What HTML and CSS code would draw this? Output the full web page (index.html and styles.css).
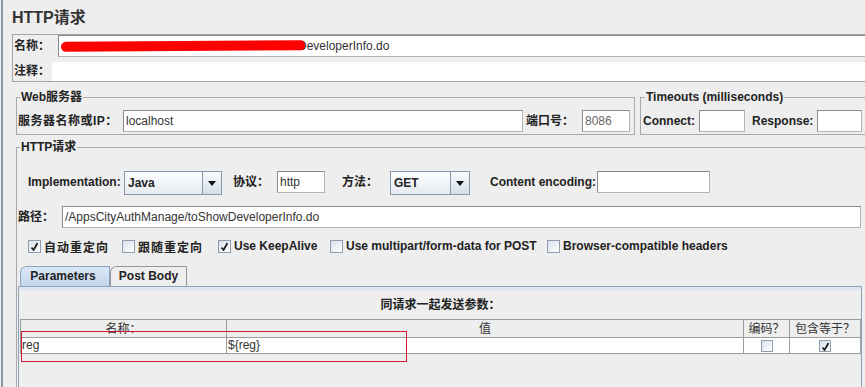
FILE: index.html
```html
<!DOCTYPE html>
<html lang="zh-CN">
<head>
    <meta charset="UTF-8">
    <title>HTTP请求</title>
    <link rel="stylesheet" href="styles.css">
</head>
<body>
    <div class="app">
        <h1 class="title">HTTP请求</h1>

        <!-- name / comment block -->
        <div class="name-box">
            <div class="name-row">
                <span class="lbl name-lbl">名称：</span>
                <div class="field name-field">
                    <span class="masked"></span>DeveloperInfo.do
                    <span class="scribble"></span>
                </div>
            </div>
            <div class="comment-row">
                <span class="lbl comment-lbl">注释：</span>
                <div class="comment-field"></div>
            </div>
        </div>

        <div class="server-row">
            <fieldset class="group web-group">
                <legend>Web服务器</legend>
                <div class="row">
                    <span class="lbl host-lbl">服务器名称或IP：</span>
                    <div class="field host-field">localhost</div>
                    <span class="lbl port-lbl">端口号：</span>
                    <div class="field port-field">8086</div>
                </div>
            </fieldset>
            <fieldset class="group timeout-group">
                <legend>Timeouts (milliseconds)</legend>
                <div class="row">
                    <span class="lbl connect-lbl">Connect:</span>
                    <div class="field connect-field"></div>
                    <span class="lbl response-lbl">Response:</span>
                    <div class="field response-field"></div>
                </div>
            </fieldset>
        </div>

        <fieldset class="group http-group">
            <legend>HTTP请求</legend>

            <div class="impl-row">
                <span class="lbl impl-lbl">Implementation:</span>
                <div class="combo impl-combo">
                    <span class="combo-value">Java</span>
                    <span class="combo-btn"><span class="arrow"></span></span>
                </div>
                <span class="lbl proto-lbl">协议：</span>
                <div class="field proto-field">http</div>
                <span class="lbl method-lbl">方法：</span>
                <div class="combo method-combo">
                    <span class="combo-value">GET</span>
                    <span class="combo-btn"><span class="arrow"></span></span>
                </div>
                <span class="lbl enc-lbl">Content encoding:</span>
                <div class="field enc-field"></div>
            </div>

            <div class="path-row">
                <span class="lbl path-lbl">路径：</span>
                <div class="field path-field">/AppsCityAuthManage/toShowDeveloperInfo.do</div>
            </div>

            <div class="check-row">
                <label class="check w1"><span class="cb on"></span><span class="wide">自动重定向</span></label>
                <label class="check w2"><span class="cb"></span><span class="wide">跟随重定向</span></label>
                <label class="check w3"><span class="cb on"></span>Use KeepAlive</label>
                <label class="check w4"><span class="cb"></span>Use multipart/form-data for POST</label>
                <label class="check"><span class="cb"></span>Browser-compatible headers</label>
            </div>

            <div class="tabs">
                <div class="tab active">Parameters</div>
                <div class="tab">Post Body</div>
            </div>
            <div class="tab-panel">
                <div class="panel-title">同请求一起发送参数：</div>
                <table class="params">
                    <colgroup>
                        <col class="c-name">
                        <col class="c-value">
                        <col class="c-enc">
                        <col class="c-eq">
                    </colgroup>
                    <thead>
                        <tr>
                            <th>名称：</th>
                            <th>值</th>
                            <th>编码？</th>
                            <th>包含等于？</th>
                        </tr>
                    </thead>
                    <tbody>
                        <tr>
                            <td>reg</td>
                            <td>${reg}</td>
                            <td class="mid"><span class="cb small"></span></td>
                            <td class="mid"><span class="cb small on"></span></td>
                        </tr>
                    </tbody>
                </table>
            </div>
        </fieldset>
    </div>

    <div class="mark"></div>
</body>
</html>
```

FILE: styles.css
```css
html, body {
    margin: 0;
    height: 100%;
}

body {
    background: #eeeeee;
    font-family: "Liberation Sans", "Noto Sans CJK SC", sans-serif;
    font-size: 12px;
    color: #222;
    overflow: hidden;
    position: relative;
}

.app {
    margin-left: 1px;
    border-left: 2px solid #8f98aa;
    width: 880px;
    height: 387px;
    overflow: hidden;
}

.title {
    margin: 0;
    padding: 8px 0 0 9px;
    font-size: 16px;
    line-height: 20px;
    font-weight: bold;
    color: #333;
}

.lbl {
    font-weight: bold;
    white-space: nowrap;
    flex: none;
}

/* text fields */
.field {
    box-sizing: border-box;
    height: 22px;
    background: #fff;
    border: 1px solid #b4b4b4;
    border-top-color: #8a8a8a;
    border-left-color: #8a8a8a;
    padding: 0 2px;
    line-height: 20px;
    color: #333;
    white-space: nowrap;
    overflow: hidden;
    flex: none;
}

/* name / comment */
.name-box {
    margin: 6px 0 0 9px;
    border: 1px solid #a5a5a5;
    border-right: none;
}

.name-row {
    display: flex;
    height: 22px;
}

.name-lbl {
    width: 44px;
    padding-left: 1px;
    line-height: 22px;
}

.name-field {
    flex: 1;
    position: relative;
}

.masked {
    display: inline-block;
    width: 237px;
}

/* red marker stroke hiding part of the url */
.scribble {
    position: absolute;
    left: 2px;
    top: 5px;
    width: 244px;
    height: 10px;
    background: #ff0000;
    border-radius: 6px 5px 4px 6px;
    transform: rotate(-0.4deg);
}

.comment-row {
    display: flex;
    height: 19px;
    margin-top: 5px;
}

.comment-lbl {
    width: 38px;
    padding-left: 1px;
    line-height: 19px;
}

.comment-field {
    flex: 1;
    background: #fff;
}

/* titled groups */
.group {
    margin: 0;
    min-width: 0;
    box-sizing: border-box;
    border: 1px solid #a9a9a9;
    padding: 6px 2px 2px 1px;
}

.group legend {
    font-weight: bold;
    line-height: 14px;
    padding: 0 1px;
    margin-left: 2px;
    color: #222;
}

.row {
    display: flex;
    align-items: center;
}

.row .lbl {
    line-height: 22px;
}

.server-row {
    display: flex;
    gap: 5px;
    margin: 8px 0 0 13px;
}

.web-group {
    width: 619px;
    flex: none;
}

.host-lbl { width: 105px; letter-spacing: 0.5px; }
.host-field { width: 400px; }
.port-lbl { width: 56px; padding-left: 3px; }
.port-field { width: 48px; color: #666; }

.timeout-group {
    width: 230px;
    flex: none;
    padding-left: 2px;
}

.connect-lbl { width: 56px; }
.connect-field { width: 46px; }
.response-lbl { width: 65px; margin-left: 7px; }
.response-field { width: 45px; }

/* HTTP request group */
.http-group {
    width: 860px;
    height: 260px;
    margin: 5px 0 0 13px;
    padding: 17px 0 0 1px;
}

.impl-row {
    display: flex;
    align-items: flex-start;
    height: 24px;
    padding-left: 10px;
}

.impl-row .lbl {
    line-height: 22px;
}

.impl-lbl { width: 96px; }
.proto-lbl { width: 44px; margin-left: 11px; }
.proto-field { width: 48px; }
.method-lbl { width: 48px; margin-left: 17px; }
.enc-lbl { width: 107px; margin-left: 20px; }
.enc-field { width: 113px; }

.combo {
    display: flex;
    box-sizing: border-box;
    height: 24px;
    border: 1px solid #8797aa;
    background: linear-gradient(#fbfcfd, #e6ebf1);
    flex: none;
}

.impl-combo { width: 98px; }
.method-combo { width: 80px; }

.combo-value {
    flex: 1;
    padding-left: 3px;
    line-height: 22px;
    font-weight: bold;
    color: #222;
}

.combo-btn {
    width: 18px;
    border-left: 1px solid #8797aa;
    background: linear-gradient(#f8fafc, #d5dee8);
    display: flex;
    align-items: center;
    justify-content: center;
}

.arrow {
    width: 0;
    height: 0;
    border-left: 4px solid transparent;
    border-right: 4px solid transparent;
    border-top: 5px solid #111;
}

.path-row {
    display: flex;
    margin-top: 11px;
}

.path-lbl {
    width: 44px;
    line-height: 22px;
}

.path-field { width: 799px; }

/* checkboxes */
.check-row {
    display: flex;
    align-items: center;
    height: 18px;
    margin-top: 9px;
    padding-left: 10px;
}

.check {
    display: flex;
    align-items: center;
    font-weight: bold;
    white-space: nowrap;
    flex: none;
}

.check .wide {
    letter-spacing: 1px;
}

.w1 { width: 94px; }
.w2 { width: 96px; }
.w3 { width: 112px; }
.w4 { width: 217px; }

.cb {
    box-sizing: border-box;
    width: 13px;
    height: 13px;
    margin-right: 3px;
    border: 1px solid #8e9db0;
    background: linear-gradient(135deg, #d9e0ea, #ffffff);
    display: inline-block;
    position: relative;
}

.cb.on::after {
    content: "";
    position: absolute;
    left: 2px;
    top: 1px;
    width: 7px;
    height: 9px;
    background: no-repeat center / 7px 9px url("data:image/svg+xml,%3Csvg xmlns='http://www.w3.org/2000/svg' viewBox='0 0 7 9'%3E%3Cpath d='M0.5 5.5 L2.6 8 L6.5 1' fill='none' stroke='%23222' stroke-width='1.8'/%3E%3C/svg%3E");
}

.cb.small {
    width: 12px;
    height: 12px;
    margin: 0;
    vertical-align: middle;
}

/* tabs */
.tabs {
    display: flex;
    height: 20px;
    margin: 11px 0 0 2px;
}

.tab {
    box-sizing: border-box;
    height: 20px;
    width: 77px;
    border: 1px solid #959595;
    border-bottom: none;
    border-top-left-radius: 7px 6px;
    background: #eeeeee;
    font-weight: bold;
    text-align: center;
    line-height: 19px;
    color: #222;
}

.tab.active {
    width: 90px;
    border-color: #8da4be;
    background: linear-gradient(#dbe7f5, #c3d6ed);
    padding-right: 4px;
}

.tab-panel {
    box-sizing: border-box;
    width: 844px;
    height: 120px;
    border: 1px solid #8ea2ba;
    box-shadow: inset 0 3px 0 #dde6f1;
    padding: 10px 0 0 1px;
}

.panel-title {
    font-weight: bold;
    text-align: center;
    line-height: 16px;
    margin-bottom: 6px;
}

.params {
    border-collapse: collapse;
    table-layout: fixed;
    width: 840px;
}

.c-name { width: 206px; }
.c-value { width: 517px; }
.c-enc { width: 46px; }
.c-eq { width: 71px; }

.params th {
    height: 17px;
    padding: 0;
    border: 1px solid #9c9c9c;
    background: #eeeeee;
    font-weight: normal;
    line-height: 16px;
    color: #333;
}

.params td {
    height: 15px;
    padding: 0 0 0 1px;
    border: 1px solid #9c9c9c;
    background: #fff;
    line-height: 15px;
    color: #333;
}

.params td.mid {
    text-align: center;
    padding: 0;
}

/* red annotation box drawn over the table */
.mark {
    position: absolute;
    left: 21px;
    top: 331px;
    width: 386px;
    height: 31px;
    box-sizing: border-box;
    border: 1px solid #d21838;
}
```
